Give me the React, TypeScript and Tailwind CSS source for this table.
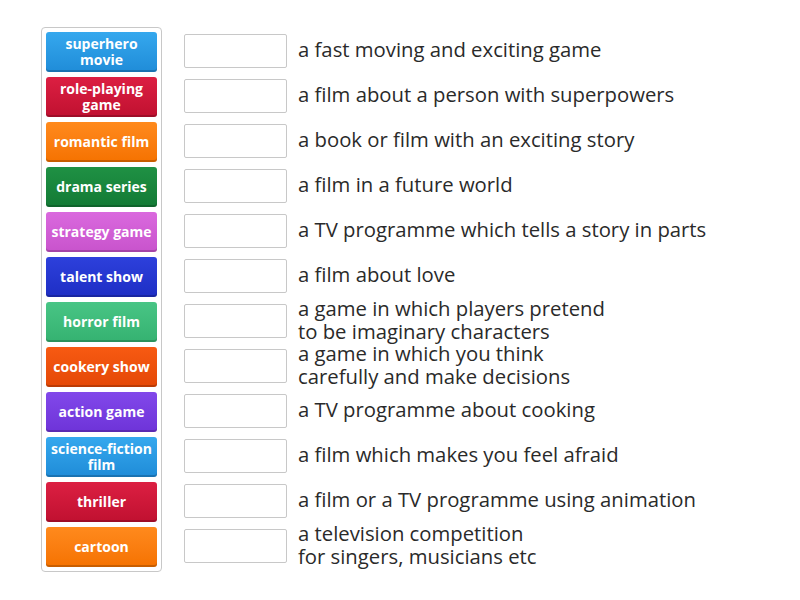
import React from "react";

const tiles: { label: string; from: string; to: string }[] = [
  { label: "superhero movie", from: "from-[#35a8ee]", to: "to-[#1f8cd8]" },
  { label: "role-playing game", from: "from-[#dc1f42]", to: "to-[#c01030]" },
  { label: "romantic film", from: "from-[#ff8a1c]", to: "to-[#f57200]" },
  { label: "drama series", from: "from-[#1f9144]", to: "to-[#137a35]" },
  { label: "strategy game", from: "from-[#da69de]", to: "to-[#c853cc]" },
  { label: "talent show", from: "from-[#2d40dc]", to: "to-[#1e2ec4]" },
  { label: "horror film", from: "from-[#48c585]", to: "to-[#35b271]" },
  { label: "cookery show", from: "from-[#f75a12]", to: "to-[#e44806]" },
  { label: "action game", from: "from-[#8248ea]", to: "to-[#6e33d8]" },
  { label: "science-fiction film", from: "from-[#35a8ee]", to: "to-[#1f8cd8]" },
  { label: "thriller", from: "from-[#dc1f42]", to: "to-[#c01030]" },
  { label: "cartoon", from: "from-[#ff8a1c]", to: "to-[#f57200]" },
];

const defs: string[][] = [
  ["a fast moving and exciting game"],
  ["a film about a person with superpowers"],
  ["a book or film with an exciting story"],
  ["a film in a future world"],
  ["a TV programme which tells a story in parts"],
  ["a film about love"],
  ["a game in which players pretend", "to be imaginary characters"],
  ["a game in which you think", "carefully and make decisions"],
  ["a TV programme about cooking"],
  ["a film which makes you feel afraid"],
  ["a film or a TV programme using animation"],
  ["a television competition", "for singers, musicians etc"],
];

export default function App() {
  return (
    <div
      className="w-[800px] h-[600px] bg-white flex items-start"
      style={{ fontFamily: '"Open Sans", "Noto Sans", sans-serif' }}
    >
      <div className="ml-[41px] mt-[27px] w-[121px] border border-[#c8c8c8] rounded-[4px] p-[4px] flex flex-col gap-[5px]">
        {tiles.map((t) => (
          <div
            key={t.label}
            className={`h-[40px] w-[111px] rounded-[3px] bg-gradient-to-b ${t.from} ${t.to} shadow-[inset_0_-2px_0_rgba(0,0,0,0.18)] flex items-center justify-center text-center text-white font-bold text-[14px] leading-[16px] px-[2px] pb-[1px]`}
          >
            {t.label}
          </div>
        ))}
      </div>
      <div className="ml-[22px] mt-[32px] flex flex-col gap-[5px]">
        {defs.map((d, i) => (
          <div key={i} className="h-[40px] flex items-center">
            <div className="w-[103px] h-[34px] border border-[#c8c8c8] rounded-[2px] bg-white shrink-0 mb-[2px]" />
            <div className="ml-[11px] text-[20.3px] leading-[22.5px] text-[#2a2a2a] mb-[5px] whitespace-nowrap">
              {d.map((line, j) => (
                <div key={j}>{line}</div>
              ))}
            </div>
          </div>
        ))}
      </div>
    </div>
  );
}
